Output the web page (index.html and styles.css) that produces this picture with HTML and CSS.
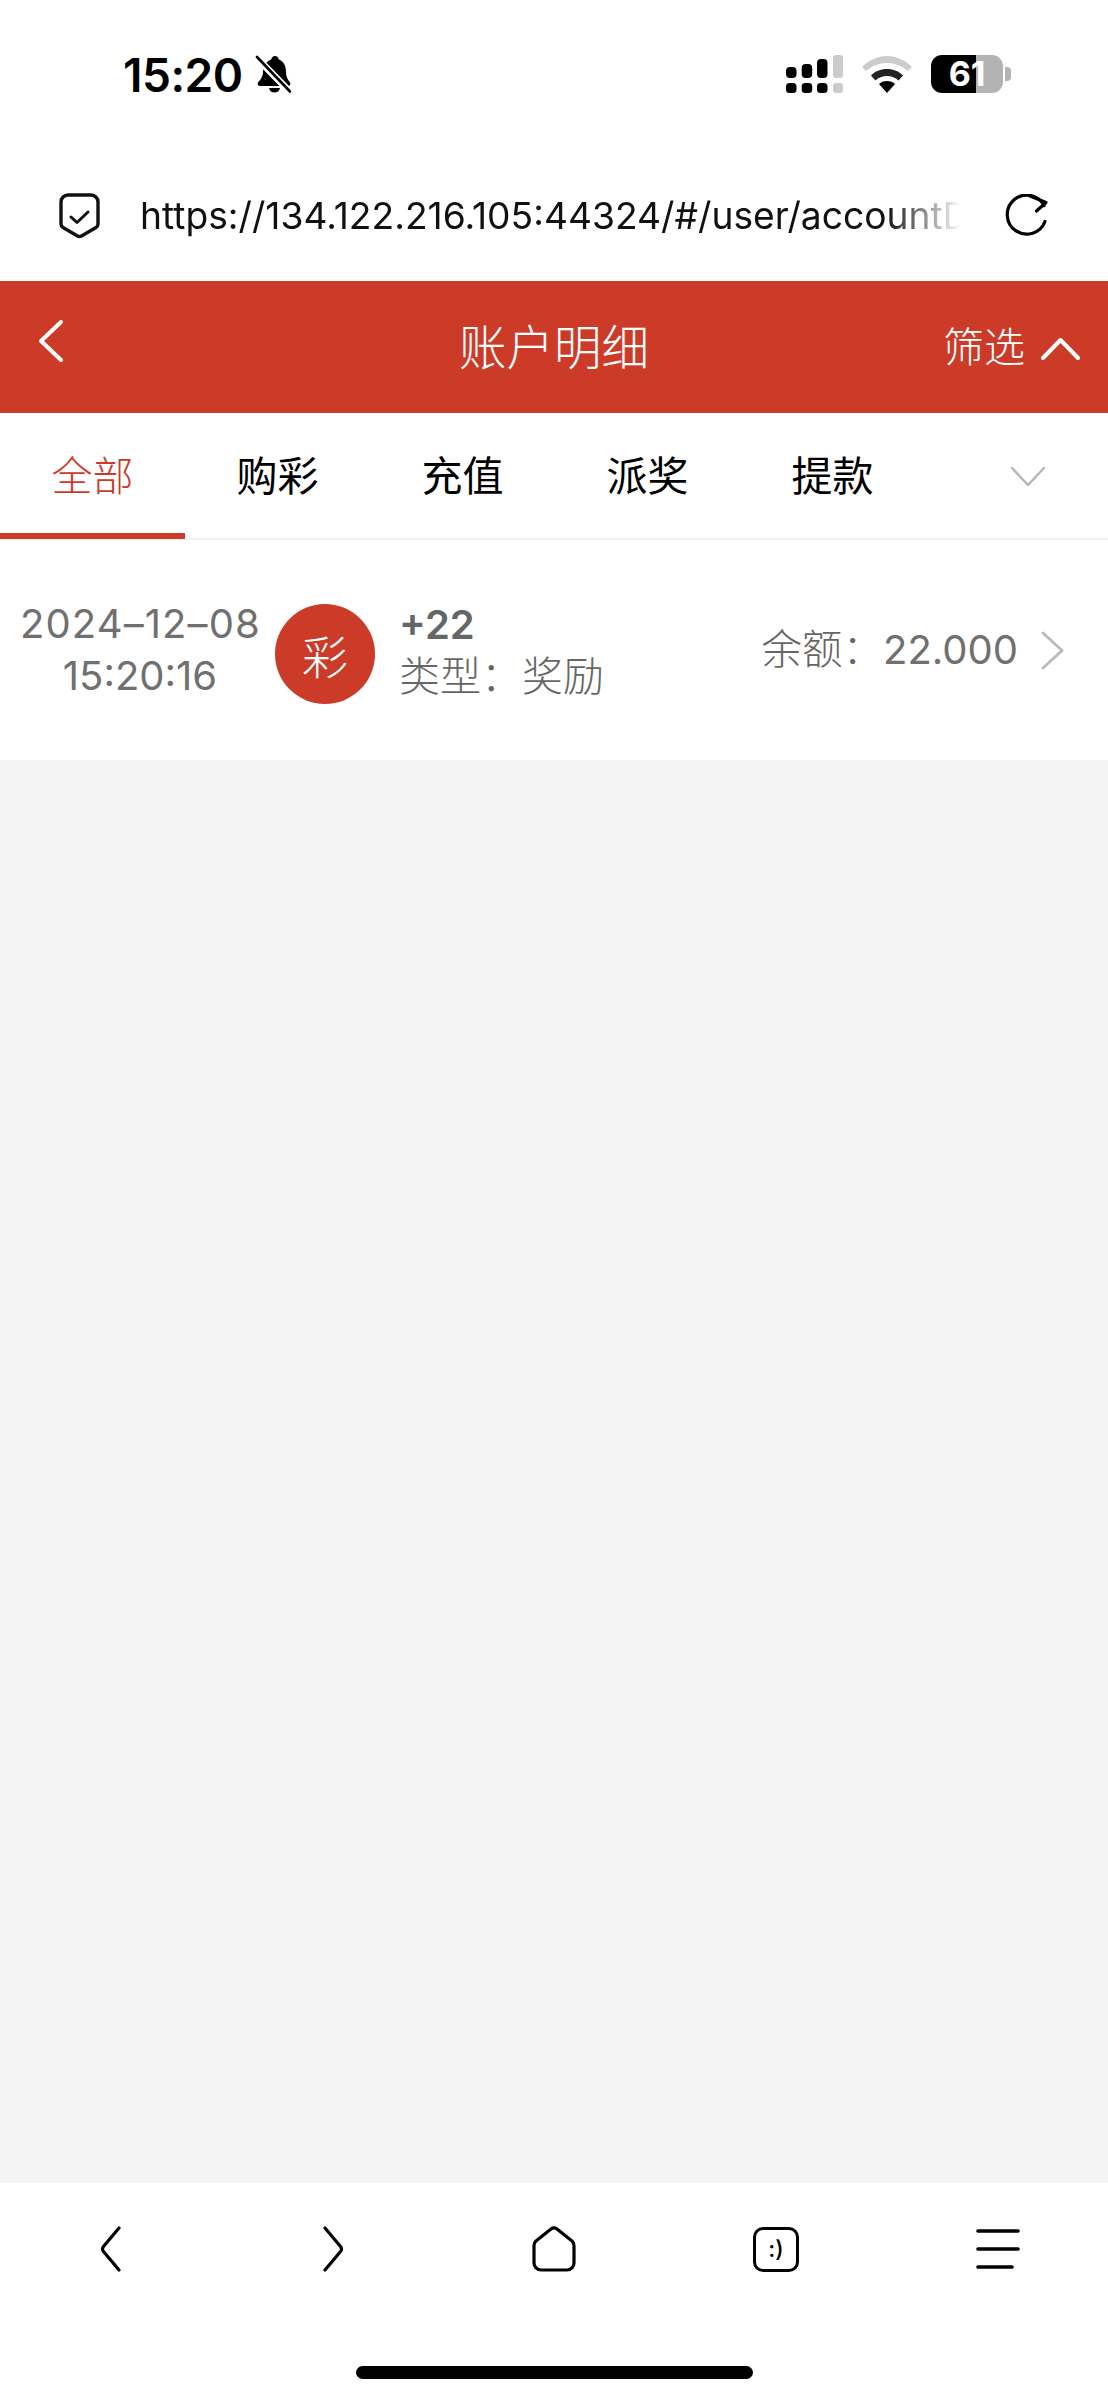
FILE: index.html
```html
<!DOCTYPE html>
<html lang="zh-CN">
<head>
<meta charset="utf-8">
<title>账户明细</title>
<link rel="stylesheet" href="styles.css">
</head>
<body>
<div class="page">
  <div class="status">
    <div class="status-left">
      <span class="time">15:20</span>
      <svg class="bell" viewBox="0 0 36 38">
        <path fill="#000" d="M20 1c2 0 3.500 1.500 3.700 3.500C29 6.500 31 11 31 17c0 5 2 8 4 10.500 1 1.500 0 3.500-2 3.500H5c-2 0-3-2-2-3.500C5 25 8 22 8 17 8 11 11 6.500 16.300 4.500 16.500 2.500 18 1 20 1z"/>
        <path fill="#000" d="M14 33h11c-.5 3-2.800 4.500-5.500 4.500S14.500 36 14 33z"/>
        <path stroke="#fff" stroke-width="7" d="M0 1 36 38"/>
        <path stroke="#000" stroke-width="2.600" stroke-linecap="round" d="M2 2 35 36.500"/>
      </svg>
    </div>
    <div class="status-right">
      <svg class="signal" viewBox="0 0 57 38">
        <rect x="0" y="12" width="10.500" height="11" rx="4"/><rect x="15.700" y="9" width="10.500" height="14" rx="4"/><rect x="31" y="4" width="10.500" height="19" rx="4"/><rect class="dim" x="47" y="0" width="10" height="23" rx="3"/>
        <rect x="0" y="28" width="10.500" height="10" rx="3.500"/><rect x="15.700" y="28" width="10.500" height="10" rx="3.500"/><rect x="31" y="28" width="10.500" height="10" rx="3.500"/><rect class="dim" x="47" y="28" width="10" height="10" rx="3"/>
      </svg>
      <svg class="wifi" viewBox="0 0 50 37">
        <path fill="#ccc" d="M25 0C15.500 0 7 4 0 11l4 4C10 10 17 7 25 7s15 3 21 8l4-4C43 4 34.500 0 25 0z"/>
        <path fill="#222" d="M25 13c-6.500 0-12 2.300-16 6.500l4.500 5C16.500 21.500 20.500 20 25 20s8.500 1.500 11.500 4.500l4.500-5C37 15.300 31.500 13 25 13z"/>
        <path fill="#000" d="M25 25c-3.300 0-6 1-8 3l8 9 8-9c-2-2-4.700-3-8-3z"/>
      </svg>
      <div class="battery">
        <div class="battery-body"><span class="battery-num">61</span></div>
        <span class="battery-nub"></span>
      </div>
    </div>
  </div>

  <div class="urlbar">
    <svg class="shield" viewBox="0 0 41 46"><path fill="none" stroke="#111" stroke-width="3.400" stroke-linejoin="round" d="M9 2h23a7 7 0 0 1 7 7v22a4 4 0 0 1-2 3.500L22.500 43a4 4 0 0 1-4 0L4 34.500A4 4 0 0 1 2 31V9a7 7 0 0 1 7-7z"/><path fill="none" stroke="#111" stroke-width="3" stroke-linecap="round" stroke-linejoin="round" d="m12 24 6 5.500L29 19"/></svg>
    <div class="url">https://134.122.216.105:44324/#/user/accountD</div>
    <svg class="reload" viewBox="0 0 44 44"><path fill="none" stroke="#000" stroke-width="3.200" stroke-linecap="round" stroke-linejoin="round" d="M40 27.500A19.500 19.500 0 1 1 39 11.500M25 2l16 6.500L31.500 17"/></svg>
  </div>

  <header class="head">
    <div class="head-left"><svg class="head-back" viewBox="0 0 26 44"><path fill="none" stroke="#fff" stroke-width="4" stroke-linecap="round" stroke-linejoin="round" d="M23 3 3 22l20 19"/></svg></div>
    <h1 class="title">账户明细</h1>
    <div class="head-right">
      <span class="filter">筛选</span>
      <svg class="head-up" viewBox="0 0 39 23"><path fill="none" stroke="#fff" stroke-width="4" stroke-linecap="round" stroke-linejoin="round" d="M2 21 19.500 3 37 21"/></svg>
    </div>
  </header>

  <nav class="tabs">
    <a class="tab active">全部</a>
    <a class="tab">购彩</a>
    <a class="tab">充值</a>
    <a class="tab">派奖</a>
    <a class="tab">提款</a>
    <div class="tab-more"><svg class="more-icon" viewBox="0 0 36 21"><path fill="none" stroke="#b5b5b5" stroke-width="2.400" stroke-linecap="round" stroke-linejoin="round" d="m2 2 16 17L34 2"/></svg></div>
  </nav>

  <section class="record">
    <div class="record-date"><div class="record-day">2024–12–08</div><div>15:20:16</div></div>
    <div class="record-badge">彩</div>
    <div class="record-main">
      <div class="amount">+22</div>
      <div class="kind">类型：奖励</div>
    </div>
    <div class="balance">余额：<span class="balance-num">22.000</span></div>
    <svg class="record-arrow" viewBox="0 0 23 39"><path fill="none" stroke="#bbb" stroke-width="3" stroke-linecap="round" stroke-linejoin="round" d="m2 2 19 17.500L2 37"/></svg>
  </section>

  <div class="blank"></div>

  <footer class="toolbar">
    <div class="tools">
      <svg class="tool tool-back" viewBox="0 0 22 46"><path fill="none" stroke="#000" stroke-width="3.200" stroke-linecap="round" stroke-linejoin="round" d="M20 2 4.500 20.500a4 4 0 0 0 0 5L20 44"/></svg>
      <svg class="tool tool-fwd" viewBox="0 0 22 46"><path fill="none" stroke="#000" stroke-width="3.200" stroke-linecap="round" stroke-linejoin="round" d="M2 2l15.500 18.500a4 4 0 0 1 0 5L2 44"/></svg>
      <svg class="tool tool-home" viewBox="0 0 44 46"><path fill="none" stroke="#000" stroke-width="3.200" stroke-linejoin="round" d="M19 3 4 15a6 6 0 0 0-2 4.500V37a7 7 0 0 0 7 7h26a7 7 0 0 0 7-7V19.500a6 6 0 0 0-2-4.500L25 3a5 5 0 0 0-6 0z"/></svg>
      <div class="tool-tabs"><span class="smile">:)</span></div>
      <svg class="tool tool-menu" viewBox="0 0 44 42"><path fill="none" stroke="#000" stroke-width="3.600" stroke-linecap="round" d="M2 3h40M2 21h40M2 39h34"/></svg>
    </div>
    <div class="home-bar"></div>
  </footer>
</div>
</body>
</html>
```
FILE: styles.css
```css
* { box-sizing: border-box; margin: 0; padding: 0; }
html, body { width: 1108px; height: 2400px; overflow: hidden; background: #fff; }
body { font-family: Inter, "Noto Sans CJK SC", sans-serif; color: #000; }
.page { width: 1108px; height: 2400px; display: flex; flex-direction: column; background: #f3f3f3; }

.status { height: 148px; background: #fff; display: flex; align-items: center; justify-content: space-between; padding: 0 97px 0 123px; }
.status-left { display: flex; align-items: center; gap: 12px; }
.time { font-size: 46px; font-weight: 600; line-height: 50px; letter-spacing: -0.5px; padding-top: 2px; }
.bell { width: 36px; height: 38px; }
.status-right { display: flex; align-items: center; gap: 19px; }
.signal { width: 57px; height: 38px; fill: #000; }
.signal .dim { fill: #ccc; }
.wifi { width: 50px; height: 37px; }
.battery { display: flex; align-items: center; gap: 2px; }
.battery-body { width: 72px; height: 38px; border-radius: 11px; background: linear-gradient(90deg, #000 45px, #b3b3b3 45px); display: flex; align-items: center; justify-content: center; }
.battery-num { color: #fff; font-size: 34px; font-weight: 700; line-height: 38px; }
.battery-nub { width: 6px; height: 14px; background: #b3b3b3; border-radius: 0 4px 4px 0; }

.urlbar { height: 133px; background: #fff; display: flex; align-items: center; padding: 2px 60px 0 59px; }
.shield { width: 41px; height: 46px; flex: none; }
.url { margin-left: 40px; width: 829px; font-size: 37.2px; line-height: 50px; white-space: nowrap; color: #111; -webkit-mask-image: linear-gradient(90deg, #000 90%, transparent 99%); mask-image: linear-gradient(90deg, #000 90%, transparent 99%); }
.reload { width: 44px; height: 44px; flex: none; margin-left: 36px; }

.head { height: 132px; background: #cb3b28; color: #fff; display: grid; grid-template-columns: 1fr auto 1fr; align-items: center; }
.head-left { padding-left: 38px; display: flex; align-items: center; padding-bottom: 12px; }
.head-back { width: 26px; height: 44px; }
.title { font-size: 47.5px; font-weight: 300; line-height: 60px; padding-top: 2px; }
.head-right { display: flex; align-items: center; justify-content: flex-end; gap: 16px; padding-right: 28px; }
.filter { font-size: 41px; font-weight: 300; line-height: 50px; }
.head-up { width: 39px; height: 23px; margin-top: 2px; }

.tabs { height: 127px; background: #fff; display: flex; border-bottom: 2px solid #f1f1f1; }
.tab { width: 185px; display: flex; align-items: center; justify-content: center; font-size: 41px; font-weight: 400; padding-bottom: 6px; color: #000; }
.tab.active { color: #cb3b28; font-weight: 300; border-bottom: 6px solid #cb3b28; margin-bottom: -1px; padding-bottom: 0; }
.tab-more { flex: 1; display: flex; align-items: center; justify-content: center; padding: 2px 0 0 22px; }
.more-icon { width: 36px; height: 21px; }

.record { height: 220px; background: #fff; display: flex; align-items: center; color: #666; }
.record-date { width: 240px; margin-left: 20px; text-align: center; font-size: 40px; font-weight: 400; line-height: 52px; color: #707070; flex: none; white-space: nowrap; }
.record-day { letter-spacing: 1.1px; }
.record-badge { width: 100px; height: 100px; margin-left: 15px; margin-top: 8px; border-radius: 50%; background: #cb3b28; color: #fff; font-size: 46px; font-weight: 300; display: flex; align-items: center; justify-content: center; flex: none; }
.record-main { margin-left: 24px; flex: 1; padding-top: 8px; }
.amount { font-size: 40px; font-weight: 600; line-height: 48px; color: #666; margin-top: -4px; }
.kind { font-size: 41px; font-weight: 300; line-height: 54px; color: #666; }
.balance { font-size: 40.5px; font-weight: 300; line-height: 50px; color: #666; }
.balance-num { font-size: 40px; font-weight: 400; color: #707070; }
.record-arrow { width: 23px; height: 39px; margin: 0 44px 0 23px; flex: none; }

.blank { flex: 1; }

.toolbar { height: 217px; background: #fff; display: flex; flex-direction: column; align-items: center; padding-top: 43px; }
.tools { width: 100%; height: 46px; display: flex; align-items: center; }
.tool { flex: none; }
.tool-back { width: 22px; height: 46px; margin-left: 99px; }
.tool-fwd { width: 22px; height: 46px; margin-left: 202px; }
.tool-home { width: 44px; height: 46px; margin-left: 187px; }
.tool-tabs { width: 46px; height: 45px; margin-left: 177px; border: 3.500px solid #000; border-radius: 10px; display: flex; align-items: center; justify-content: center; flex: none; }
.smile { font-size: 23px; font-weight: 500; line-height: 1; }
.tool-menu { width: 44px; height: 42px; margin-left: 177px; }
.home-bar { width: 397px; height: 13px; background: #000; border-radius: 7px; margin-top: 94px; }
```
